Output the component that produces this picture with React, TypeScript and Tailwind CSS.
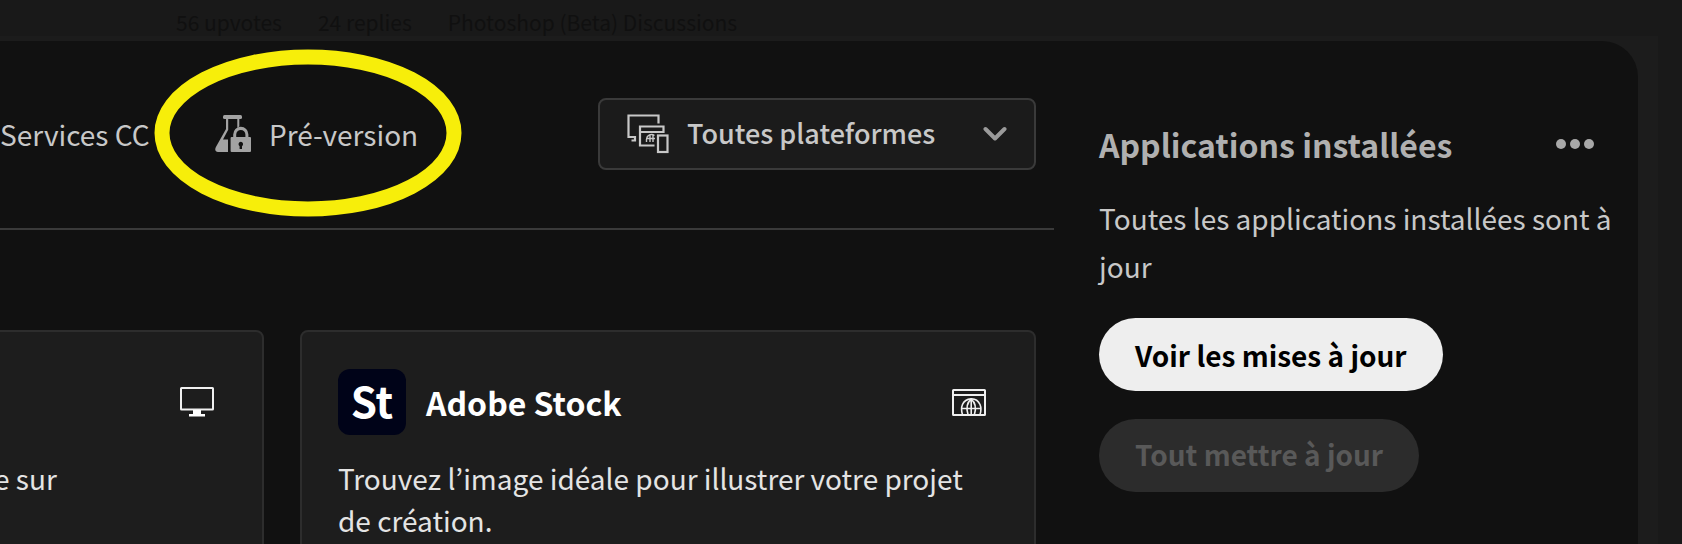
import React, { useState } from "react";

const platforms = ["Toutes plateformes", "Ordinateur", "Mobile", "Web"];

const FlaskLockIcon = () => (
  <svg className="w-9 h-[37px] shrink-0" viewBox="0 0 36 37" fill="#a3a3a3" aria-hidden="true">
    <rect x="8" y="0" width="19" height="4" rx="1.5" />
    <path d="M11 3v11L1.2 31.5C-.8 35 .6 37 3 37h10V24.5H8l5.2-9.8V3Z" />
    <path d="M22.3 3h2v8.5l-2 1.2Z" />
    <path d="M18.2 22v-2.6a7.6 7.6 0 0 1 15.2 0V22H35a1 1 0 0 1 1 1v13a1 1 0 0 1-1 1H16.600a1 1 0 0 1-1-1V23a1 1 0 0 1 1-1Zm3 0h9.200v-2.400a4.600 4.600 0 0 0-9.200 0Z" />
    <path d="M25.800 26.800a2.400 2.400 0 0 1 1.200 4.400V34h-2.400v-2.800a2.400 2.400 0 0 1 1.200-4.400Z" fill="#111" />
  </svg>
);

const PlatformsIcon = () => (
  <svg className="w-[42px] h-10" viewBox="0 0 42 40" fill="none" stroke="#c8c8c8" strokeWidth="2.200" aria-hidden="true">
    <path d="M31.500 9.500V1.500H1.500v21.500H8v3.500H4.500" />
    <path d="M27.500 31.500H13V12.500h23.500v5.500H13" />
    <rect x="31" y="21.500" width="9.500" height="16.500" />
    <path d="M19.500 28v-3a5 5 0 0 1 8-3.500M23 20.500V28M26 21v7M19 24.500h9" strokeWidth="1.400" />
  </svg>
);

const ChevronIcon = () => (
  <svg className="w-6 h-4" viewBox="0 0 24 16" fill="none" stroke="#9b9b9b" strokeWidth="4" strokeLinecap="round" strokeLinejoin="round" aria-hidden="true">
    <path d="M2.500 3 12 12.500 21.500 3" />
  </svg>
);

const DesktopIcon = () => (
  <svg className="w-[34px] h-[30px]" viewBox="0 0 34 30" fill="none" stroke="#f0f0f0" aria-hidden="true">
    <rect x="1" y="1" width="32" height="21.500" rx="0.500" strokeWidth="2" />
    <path d="M13 23h8v4h4v2.500H9V27h4Z" fill="#fff" stroke="none" />
  </svg>
);

const WebIcon = () => (
  <svg className="w-[34px] h-[27px]" viewBox="0 0 34 27" fill="none" stroke="#f0f0f0" strokeWidth="2" aria-hidden="true">
    <rect x="1" y="1" width="32" height="25" rx="0.500" />
    <path d="M1 6h32" />
    <path d="M10.500 25.500c-1-3-1.500-6.500 0-10 3-7 14-8 17.500 0 1.500 3.500 1 7 0 10" strokeWidth="1.600" />
    <path d="M16 25.500c-1.800-6-.8-12 3.200-15.300 4 3.300 5 9.300 3.200 15.300M19.200 10v16M9.500 19.500h19.500" strokeWidth="1.600" />
  </svg>
);

const App = () => {
  const [platform, setPlatform] = useState(platforms[0]);

  return (
    <div className="flex flex-col h-screen overflow-hidden bg-[#191919] font-['Noto_Sans_CJK_KR','Noto_Sans',sans-serif] text-[28px] text-[#c8c8c8]">
      <header className="flex items-center h-9 shrink-0 pt-2 pl-44 text-[21px] leading-6 text-[#101010] whitespace-nowrap">
        <span className="mr-9">56 upvotes</span>
        <span className="mr-9">24 replies</span>
        <span>Photoshop (Beta) Discussions</span>
      </header>

      <div className="flex flex-1 min-h-0 mr-6 pt-[5px] pr-5 bg-[#1c1c1c]">
        <div className="relative flex flex-1 min-w-0 rounded-tr-[36px] bg-[#111]">
          <main className="flex flex-col flex-1 min-w-0">
            <div className="flex items-center justify-between h-[189px] shrink-0 pb-0.5 pr-[18px] border-b-2 border-[#3a3a3a]">
              <nav className="flex items-center h-full leading-9 whitespace-nowrap">
                <a href="#services" className="w-[215px]">
                  Services CC
                </a>
                <a href="#pre-version" className="flex items-center gap-[18px]">
                  <FlaskLockIcon />
                  Pré-version
                </a>
              </nav>

              <div className="relative w-[438px]">
                <label htmlFor="platform" className="absolute left-[29px] top-4">
                  <PlatformsIcon />
                </label>
                <select
                  id="platform"
                  aria-label="Plateforme"
                  className="block w-full h-18 pl-[87px] pr-16 border-2 border-[#3a3a3a] rounded-lg bg-[#1b1b1b] text-[27px] font-medium appearance-none"
                  value={platform}
                  onChange={(e) => setPlatform(e.target.value)}
                >
                  {platforms.map((item) => (
                    <option key={item}>{item}</option>
                  ))}
                </select>
                <span className="absolute right-[29px] top-7 flex pointer-events-none">
                  <ChevronIcon />
                </span>
              </div>
            </div>

            <div className="flex flex-1 min-h-0 gap-9 pt-[100px] pr-[18px] text-[#e4e4e4]">
              <article className="flex-1 min-w-0 -ml-2 -mb-2 pt-[37px] pr-12 border-2 border-[#2d2d2d] rounded-lg bg-[#1d1d1d]">
                <div className="flex items-center justify-end h-[66px]">
                  <DesktopIcon />
                </div>
                <p className="mt-[22px] leading-[42px]">e sur</p>
              </article>

              <article className="w-[736px] shrink-0 -mb-2 pt-[37px] px-9 border-2 border-[#2d2d2d] rounded-lg bg-[#1d1d1d]">
                <div className="flex items-center h-[66px] pr-3">
                  <span className="flex items-center justify-center w-[68px] h-[66px] pb-1 rounded-xl bg-[#000318] text-[42px] leading-none font-bold text-white">
                    St
                  </span>
                  <h2 className="flex-1 ml-5 text-[32px] leading-10 font-bold text-white">Adobe Stock</h2>
                  <WebIcon />
                </div>
                <p className="mt-[22px] leading-[42px]">Trouvez l’image idéale pour illustrer votre projet de création.</p>
              </article>
            </div>
          </main>

          <aside className="flex flex-col items-start w-[584px] shrink-0 pt-20 pl-[45px] pr-4">
            <div className="flex items-center justify-between w-full pr-7 pb-0.5">
              <h2 className="text-[32px] leading-[46px] font-bold text-[#b0b0b0]">Applications installées</h2>
              <button type="button" aria-label="Plus d’options" className="flex gap-1">
                <span className="size-[10px] rounded-full bg-[#a8a8a8]" />
                <span className="size-[10px] rounded-full bg-[#a8a8a8]" />
                <span className="size-[10px] rounded-full bg-[#a8a8a8]" />
              </button>
            </div>
            <p className="mt-[25px] leading-12">Toutes les applications installées sont à jour</p>
            <button type="button" className="h-[73px] mt-7 px-9 rounded-full bg-[#eee] font-bold text-black">
              Voir les mises à jour
            </button>
            <button type="button" disabled className="h-[73px] mt-7 px-9 pb-1 rounded-full bg-[#2c2c2c] font-bold text-[#595959]">
              Tout mettre à jour
            </button>
          </aside>

          {/* highlight around the pre-release tab */}
          <svg className="absolute left-[154px] top-2 w-[308px] h-42 pointer-events-none" viewBox="0 0 308 168" fill="none" aria-hidden="true">
            <ellipse cx="154" cy="84" rx="146" ry="76" stroke="#f7ee0a" strokeWidth="15" />
          </svg>
        </div>
      </div>
    </div>
  );
};

export default App;
